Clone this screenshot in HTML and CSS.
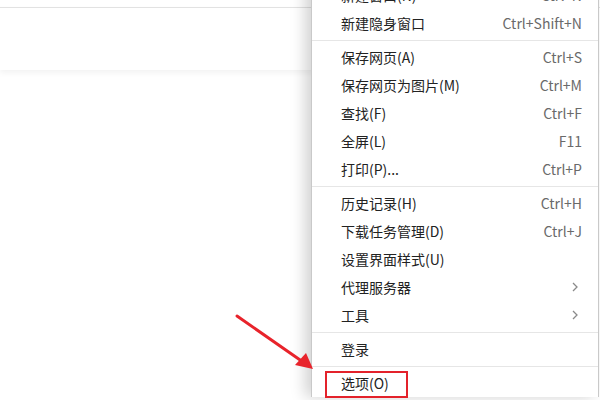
FILE: index.html
```html
<!DOCTYPE html>
<html lang="zh-CN">
  <head>
    <meta charset="UTF-8" />
    <meta name="viewport" content="width=device-width, initial-scale=1.0" />
    <title>菜单 - 选项</title>
    <link rel="stylesheet" href="styles.css">
  </head>
  <body>
    <div class="page">
      <div class="toolbar"></div>
    </div>

    <div class="menu">
      <div class="item"><span>新建窗口(N)</span><span class="key">Ctrl+N</span></div>
      <div class="item"><span>新建隐身窗口</span><span class="key">Ctrl+Shift+N</span></div>
      <div class="sep"></div>
      <div class="item"><span>保存网页(A)</span><span class="key">Ctrl+S</span></div>
      <div class="item"><span>保存网页为图片(M)</span><span class="key">Ctrl+M</span></div>
      <div class="item"><span>查找(F)</span><span class="key">Ctrl+F</span></div>
      <div class="item"><span>全屏(L)</span><span class="key">F11</span></div>
      <div class="item"><span>打印(P)...</span><span class="key">Ctrl+P</span></div>
      <div class="sep"></div>
      <div class="item"><span>历史记录(H)</span><span class="key">Ctrl+H</span></div>
      <div class="item"><span>下载任务管理(D)</span><span class="key">Ctrl+J</span></div>
      <div class="item"><span>设置界面样式(U)</span></div>
      <div class="item"><span>代理服务器</span>
        <svg class="chev" width="6" height="10" viewBox="0 0 6 10"><path d="M1 1l4 4-4 4" fill="none" stroke="#8a8a8a" stroke-width="1.3"/></svg>
      </div>
      <div class="item"><span>工具</span>
        <svg class="chev" width="6" height="10" viewBox="0 0 6 10"><path d="M1 1l4 4-4 4" fill="none" stroke="#8a8a8a" stroke-width="1.3"/></svg>
      </div>
      <div class="sep"></div>
      <div class="item"><span>登录</span></div>
      <div class="sep"></div>
      <div class="item"><span>选项(O)</span></div>
    </div>

    <div class="highlight"></div>

    <svg class="arrow" width="90" height="65" viewBox="0 0 90 65">
      <line x1="2" y1="2" x2="68" y2="48" stroke="#e8232b" stroke-width="3" stroke-linecap="round"/>
      <polygon points="78,55 60,51 71,39" fill="#e8232b"/>
    </svg>
  </body>
</html>
```

FILE: styles.css
```css
body {
  margin: 0;
  width: 600px;
  height: 400px;
  overflow: hidden;
  background-color: #fff;
  font-family: "Noto Sans CJK SC", "Liberation Sans", sans-serif;
}
.page {
  padding-top: 7px;
}
.toolbar {
  height: 62px;
  border-top: 1px solid #e2e2e2;
  background-color: #fff;
  box-shadow: 0 3px 6px rgba(0, 0, 0, 0.05);
}
.menu {
  position: absolute;
  left: 311px;
  top: -19px;
  width: 286px;
  background-color: #fff;
  border-left: 1px solid #c9c9c9;
  border-right: 1px solid #c9c9c9;
  box-shadow: -6px 0 14px rgba(0, 0, 0, 0.18);
}
.item {
  height: 28px;
  display: flex;
  align-items: center;
  justify-content: space-between;
  padding: 0 16px 0 29px;
  font-size: 14px;
  color: #222;
}
.key {
  color: #6a6a6a;
}
.chev {
  margin-right: 4px;
}
.sep {
  height: 1px;
  margin: 3px 0 2px;
  background-color: #e6e6e6;
}
.highlight {
  position: absolute;
  left: 325px;
  top: 371px;
  width: 79px;
  height: 23px;
  border: 2px solid #e3222b;
}
.arrow {
  position: absolute;
  left: 235px;
  top: 314px;
}
```
